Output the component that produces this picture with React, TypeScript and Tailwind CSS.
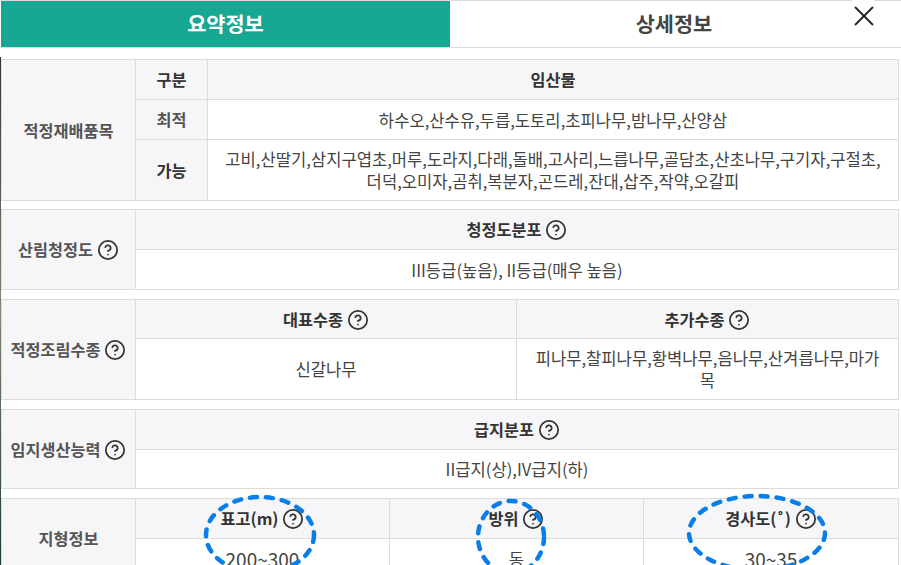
import { CircleHelp } from 'lucide-react'

const border = 'border border-[#dcdcdc]'
const thBase = `${border} bg-[#f6f6f8] font-bold text-[16.3px]`
const th = `${thBase} text-[#333]`
const thGray = `${thBase} text-[#555]`
const td = `${border} bg-white font-normal text-[#444] text-[16.6px] text-center leading-[22px]`
const tdNum = `${border} bg-white font-normal text-[#444] text-[19px] text-center leading-[22px]`

function Help() {
  return <CircleHelp className="inline-block w-[22px] h-[22px] ml-[4px] align-[-5px] text-[#333]" strokeWidth={1.9} />
}

function Ellipse({ cx, cy, rx, ry }: { cx: number; cy: number; rx: number; ry: number }) {
  return <ellipse cx={cx} cy={cy} rx={rx} ry={ry} fill="none" stroke="#0a7ee8" strokeWidth={4.5} strokeLinecap="round" strokeDasharray="7 9" />
}

export default function App() {
  return (
    <div className="relative w-[901px] h-[565px] overflow-hidden bg-white" style={{ fontFamily: '"Noto Sans CJK KR", "Noto Sans", sans-serif' }}>
      <div className="flex h-[48px] pl-[1px] border-t border-b border-[#dcdcdc]">
        <div className="w-[449px] bg-[#17a893] text-white text-[20.8px] font-bold flex items-center justify-center">요약정보</div>
        <div className="flex-1 pr-[3px] text-[#444] text-[20.8px] font-bold flex items-center justify-center">상세정보</div>
      </div>

      <button className="absolute right-[27px] top-0 w-[22px] pt-[6px] pb-[2px] bg-white flex justify-end text-[#222]">
        <svg width="20" height="20" viewBox="0 0 20 20" fill="none" stroke="currentColor" strokeWidth="1.8"><path d="M1 1L19 19M19 1L1 19" /></svg>
      </button>

      <div className="absolute left-0 top-[57px] bottom-0 w-[1px] bg-gradient-to-b from-[#2c3a30] via-[#7d8a74] to-[#1f3a30]" />

      <div className="pl-[1px] pr-[2px] pt-[11px] flex flex-col">
        <table className="w-full border-collapse table-fixed">
          <colgroup><col className="w-[134px]" /><col className="w-[72px]" /><col /></colgroup>
          <tbody>
            <tr className="h-[40px]">
              <th rowSpan={3} className={thGray}>적정재배품목</th>
              <th className={th}>구분</th>
              <th className={th}>임산물</th>
            </tr>
            <tr className="h-[40px]">
              <th className={thGray}>최적</th>
              <td className={td}>하수오,산수유,두릅,도토리,초피나무,밤나무,산양삼</td>
            </tr>
            <tr className="h-[61px]">
              <th className={th}>가능</th>
              <td className={`${td} px-[6px]`}>고비,산딸기,삼지구엽초,머루,도라지,다래,돌배,고사리,느릅나무,골담초,산초나무,구기자,구절초,<br />더덕,오미자,곰취,복분자,곤드레,잔대,삽주,작약,오갈피</td>
            </tr>
          </tbody>
        </table>

        <table className="w-full border-collapse table-fixed mt-[8px]">
          <colgroup><col className="w-[134px]" /><col /></colgroup>
          <tbody>
            <tr className="h-[40px]">
              <th rowSpan={2} className={thGray}>산림청정도<Help /></th>
              <th className={th}>청정도분포<Help /></th>
            </tr>
            <tr className="h-[40px]"><td className={td}>III등급(높음), II등급(매우 높음)</td></tr>
          </tbody>
        </table>

        <table className="w-full border-collapse table-fixed mt-[9px]">
          <colgroup><col className="w-[134px]" /><col className="w-[381px]" /><col /></colgroup>
          <tbody>
            <tr className="h-[39px]">
              <th rowSpan={2} className={thGray}>적정조림수종<Help /></th>
              <th className={th}>대표수종<Help /></th>
              <th className={th}>추가수종<Help /></th>
            </tr>
            <tr className="h-[61px]">
              <td className={td}>신갈나무</td>
              <td className={`${td} px-[14px]`}>피나무,찰피나무,황벽나무,음나무,산겨릅나무,마가목</td>
            </tr>
          </tbody>
        </table>

        <table className="w-full border-collapse table-fixed mt-[9px]">
          <colgroup><col className="w-[134px]" /><col /></colgroup>
          <tbody>
            <tr className="h-[40px]">
              <th rowSpan={2} className={thGray}>임지생산능력<Help /></th>
              <th className={th}>급지분포<Help /></th>
            </tr>
            <tr className="h-[39px]"><td className={td}>II급지(상),IV급지(하)</td></tr>
          </tbody>
        </table>

        <table className="w-full border-collapse table-fixed mt-[9px]">
          <colgroup><col className="w-[134px]" /><col className="w-[254px]" /><col className="w-[254px]" /><col /></colgroup>
          <tbody>
            <tr className="h-[40px]">
              <th rowSpan={2} className={thGray}>지형정보</th>
              <th className={th}>표고(m)<Help /></th>
              <th className={th}>방위<Help /></th>
              <th className={th}>경사도(<span className="mx-[1.5px]">˚</span>)<Help /></th>
            </tr>
            <tr className="h-[40px]">
              <td className={tdNum}>200~300</td>
              <td className={td}>동</td>
              <td className={tdNum}>30~35</td>
            </tr>
          </tbody>
        </table>
      </div>

      <svg className="absolute inset-0 pointer-events-none" width="901" height="565">
        <Ellipse cx={260} cy={535} rx={54} ry={38} />
        <Ellipse cx={511} cy={537} rx={33} ry={36} />
        <Ellipse cx={757} cy={533} rx={68} ry={37} />
      </svg>
    </div>
  )
}
